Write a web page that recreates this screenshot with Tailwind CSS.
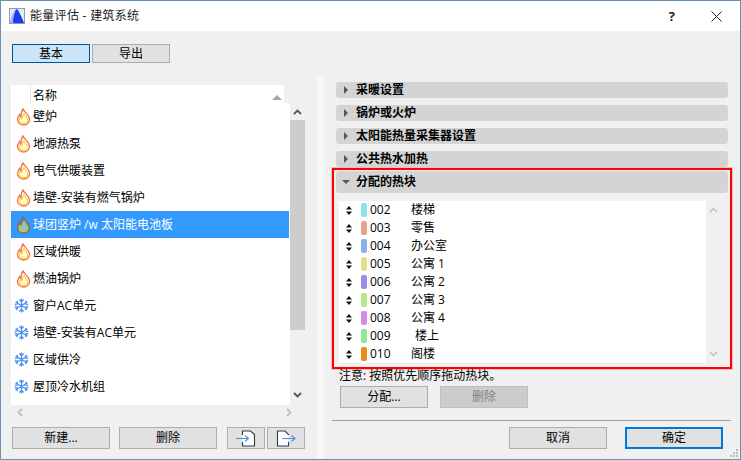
<!DOCTYPE html>
<html lang="zh">
<head>
  <meta charset="UTF-8" />
  <title>能量评估 - 建筑系统</title>
  <script src="https://cdn.jsdelivr.net/npm/@tailwindcss/browser@4"></script>
</head>
<body class="bg-[#f0f0f0]">
  <div class="relative w-[741px] h-[460px] overflow-hidden bg-[#f0f0f0] border border-[#6d8fb0] text-[12px] leading-[16px] text-black font-['Open_Sans','Noto_Sans_CJK_SC',sans-serif]">

    <!-- Title bar -->
    <div class="flex items-center h-[30px] bg-white">
      <svg class="ml-[8px] w-[16px] h-[16px]" viewBox="0 0 16 16">
        <rect x="0.5" y="0.5" width="15" height="15" fill="#e8edf5" stroke="#8a9bb5" />
        <path d="M1 15 C3 8 5 2 8 1 C10 3 13 10 15 15 Z" fill="#1a3cf0" />
        <path d="M1 15 C2 9 4 4 7 1.5 C5 6 4 11 4 15 Z" fill="#a9b8f5" />
      </svg>
      <span class="ml-[5px] text-[#222] tracking-[0.3px]">能量评估 - 建筑系统</span>
      <span class="ml-auto mr-[36px] text-[13px] font-bold text-[#222]">?</span>
      <svg class="mr-[18px] w-[11px] h-[11px]" viewBox="0 0 11 11"><path d="M0.5 0.5 L10.5 10.5 M10.5 0.5 L0.5 10.5" stroke="#222" stroke-width="1" fill="none" /></svg>
    </div>

    <!-- Tabs -->
    <div class="flex gap-[2px] pl-[11px] pt-[13px] h-[40px]">
      <div class="flex items-center justify-center w-[78px] h-[19px] bg-[#cce4f7] border border-[#005499]">基本</div>
      <div class="flex items-center justify-center w-[78px] h-[19px] bg-[#e1e1e1] border border-[#adadad]">导出</div>
    </div>

    <div class="flex">
      <!-- Left: system list -->
      <div class="w-[305px] pl-[10px] pt-[14px] shrink-0">
        <div class="flex items-center w-[273px] h-[18px] bg-white">
          <div class="w-[20px] h-full border-r border-[#e5e5e5]"></div>
          <span class="ml-[2px] pt-[3px]">名称</span>
          <span class="ml-auto mr-[2px] mt-[6px] w-0 h-0 border-x-[5px] border-x-transparent border-b-[5px] border-b-[#a6a6a6]"></span>
        </div>
        <div class="flex w-[294px] h-[302px]">
          <div id="systems" class="w-[279px] h-full bg-white">
            <div class="flex items-center h-[27px]"><svg class="ml-[5px] w-[15px] h-[18px]" viewBox="0 0 15 18"><path d="M7 1 C8 4 13 6 13.500 11 C13.500 15 10.500 17 7.500 17 C4 17 1.500 14.500 1.500 11.500 C1.500 9.500 2.500 8 3.500 6.500 C4 8 4.500 8.500 5 9 C5 6 5.500 3 7 1 Z" fill="#fff" stroke="#f0704a" stroke-width="1.300" /><path d="M8 5.500 C9 8 11.800 9.500 11.800 12 C11.800 14.500 9.800 15.600 7.500 15.600 C5 15.600 3.200 14 3.200 12 C3.200 11 3.600 10.300 4 9.700 C5 11 6.500 10.500 6.500 9 C6.500 8 7.300 6.500 8 5.500 Z" fill="#fffbd0" stroke="#ffd23f" stroke-width="1.200" /></svg><span class="ml-[2px]">壁炉</span></div>
            <div class="flex items-center h-[27px]"><svg class="ml-[5px] w-[15px] h-[18px]" viewBox="0 0 15 18"><path d="M7 1 C8 4 13 6 13.500 11 C13.500 15 10.500 17 7.500 17 C4 17 1.500 14.500 1.500 11.500 C1.500 9.500 2.500 8 3.500 6.500 C4 8 4.500 8.500 5 9 C5 6 5.500 3 7 1 Z" fill="#fff" stroke="#f0704a" stroke-width="1.300" /><path d="M8 5.500 C9 8 11.800 9.500 11.800 12 C11.800 14.500 9.800 15.600 7.500 15.600 C5 15.600 3.200 14 3.200 12 C3.200 11 3.600 10.300 4 9.700 C5 11 6.500 10.500 6.500 9 C6.500 8 7.300 6.500 8 5.500 Z" fill="#fffbd0" stroke="#ffd23f" stroke-width="1.200" /></svg><span class="ml-[2px]">地源热泵</span></div>
            <div class="flex items-center h-[27px]"><svg class="ml-[5px] w-[15px] h-[18px]" viewBox="0 0 15 18"><path d="M7 1 C8 4 13 6 13.500 11 C13.500 15 10.500 17 7.500 17 C4 17 1.500 14.500 1.500 11.500 C1.500 9.500 2.500 8 3.500 6.500 C4 8 4.500 8.500 5 9 C5 6 5.500 3 7 1 Z" fill="#fff" stroke="#f0704a" stroke-width="1.300" /><path d="M8 5.500 C9 8 11.800 9.500 11.800 12 C11.800 14.500 9.800 15.600 7.500 15.600 C5 15.600 3.200 14 3.200 12 C3.200 11 3.600 10.300 4 9.700 C5 11 6.500 10.500 6.500 9 C6.500 8 7.300 6.500 8 5.500 Z" fill="#fffbd0" stroke="#ffd23f" stroke-width="1.200" /></svg><span class="ml-[2px]">电气供暖装置</span></div>
            <div class="flex items-center h-[27px]"><svg class="ml-[5px] w-[15px] h-[18px]" viewBox="0 0 15 18"><path d="M7 1 C8 4 13 6 13.500 11 C13.500 15 10.500 17 7.500 17 C4 17 1.500 14.500 1.500 11.500 C1.500 9.500 2.500 8 3.500 6.500 C4 8 4.500 8.500 5 9 C5 6 5.500 3 7 1 Z" fill="#fff" stroke="#f0704a" stroke-width="1.300" /><path d="M8 5.500 C9 8 11.800 9.500 11.800 12 C11.800 14.500 9.800 15.600 7.500 15.600 C5 15.600 3.200 14 3.200 12 C3.200 11 3.600 10.300 4 9.700 C5 11 6.500 10.500 6.500 9 C6.500 8 7.300 6.500 8 5.500 Z" fill="#fffbd0" stroke="#ffd23f" stroke-width="1.200" /></svg><span class="ml-[2px]">墙壁-安装有燃气锅炉</span></div>
            <div class="flex items-center h-[27px] w-[278px] bg-[#3399ff] text-white"><svg class="ml-[5px] w-[15px] h-[18px]" viewBox="0 0 15 18"><path d="M7 1 C8 4 13 6 13.500 11 C13.500 15 10.500 17 7.500 17 C4 17 1.500 14.500 1.500 11.500 C1.500 9.500 2.500 8 3.500 6.500 C4 8 4.500 8.500 5 9 C5 6 5.500 3 7 1 Z" fill="#3399ff" stroke="#a8603f" stroke-width="1.300" /><path d="M8 5.500 C9 8 11.800 9.500 11.800 12 C11.800 14.500 9.800 15.600 7.500 15.600 C5 15.600 3.200 14 3.200 12 C3.200 11 3.600 10.300 4 9.700 C5 11 6.500 10.500 6.500 9 C6.500 8 7.300 6.500 8 5.500 Z" fill="#8fc4c8" stroke="#c8c838" stroke-width="1.200" /></svg><span class="ml-[2px]">球团竖炉 /w 太阳能电池板</span></div>
            <div class="flex items-center h-[27px]"><svg class="ml-[5px] w-[15px] h-[18px]" viewBox="0 0 15 18"><path d="M7 1 C8 4 13 6 13.500 11 C13.500 15 10.500 17 7.500 17 C4 17 1.500 14.500 1.500 11.500 C1.500 9.500 2.500 8 3.500 6.500 C4 8 4.500 8.500 5 9 C5 6 5.500 3 7 1 Z" fill="#fff" stroke="#f0704a" stroke-width="1.300" /><path d="M8 5.500 C9 8 11.800 9.500 11.800 12 C11.800 14.500 9.800 15.600 7.500 15.600 C5 15.600 3.200 14 3.200 12 C3.200 11 3.600 10.300 4 9.700 C5 11 6.500 10.500 6.500 9 C6.500 8 7.300 6.500 8 5.500 Z" fill="#fffbd0" stroke="#ffd23f" stroke-width="1.200" /></svg><span class="ml-[2px]">区域供暖</span></div>
            <div class="flex items-center h-[27px]"><svg class="ml-[5px] w-[15px] h-[18px]" viewBox="0 0 15 18"><path d="M7 1 C8 4 13 6 13.500 11 C13.500 15 10.500 17 7.500 17 C4 17 1.500 14.500 1.500 11.500 C1.500 9.500 2.500 8 3.500 6.500 C4 8 4.500 8.500 5 9 C5 6 5.500 3 7 1 Z" fill="#fff" stroke="#f0704a" stroke-width="1.300" /><path d="M8 5.500 C9 8 11.800 9.500 11.800 12 C11.800 14.500 9.800 15.600 7.500 15.600 C5 15.600 3.200 14 3.200 12 C3.200 11 3.600 10.300 4 9.700 C5 11 6.500 10.500 6.500 9 C6.500 8 7.300 6.500 8 5.500 Z" fill="#fffbd0" stroke="#ffd23f" stroke-width="1.200" /></svg><span class="ml-[2px]">燃油锅炉</span></div>
            <div class="flex items-center h-[27px]"><svg class="ml-[3px] w-[15px] h-[15px]" viewBox="0 0 15 15"><path d="M7.500 0.500 V14.500 M1.500 4 L13.500 11 M13.500 4 L1.500 11 M5.300 1.500 L7.500 3.700 L9.700 1.500 M5.300 13.500 L7.500 11.300 L9.700 13.500 M0.800 6.500 L3.700 5.700 L3 2.800 M14.200 6.500 L11.300 5.700 L12 2.800 M0.800 8.500 L3.700 9.300 L3 12.200 M14.200 8.500 L11.300 9.300 L12 12.200" stroke="#4a90f0" stroke-width="1.300" fill="none" /></svg><span class="ml-[4px]">窗户AC单元</span></div>
            <div class="flex items-center h-[27px]"><svg class="ml-[3px] w-[15px] h-[15px]" viewBox="0 0 15 15"><path d="M7.500 0.500 V14.500 M1.500 4 L13.500 11 M13.500 4 L1.500 11 M5.300 1.500 L7.500 3.700 L9.700 1.500 M5.300 13.500 L7.500 11.300 L9.700 13.500 M0.800 6.500 L3.700 5.700 L3 2.800 M14.200 6.500 L11.300 5.700 L12 2.800 M0.800 8.500 L3.700 9.300 L3 12.200 M14.200 8.500 L11.300 9.300 L12 12.200" stroke="#4a90f0" stroke-width="1.300" fill="none" /></svg><span class="ml-[4px]">墙壁-安装有AC单元</span></div>
            <div class="flex items-center h-[27px]"><svg class="ml-[3px] w-[15px] h-[15px]" viewBox="0 0 15 15"><path d="M7.500 0.500 V14.500 M1.500 4 L13.500 11 M13.500 4 L1.500 11 M5.300 1.500 L7.500 3.700 L9.700 1.500 M5.300 13.500 L7.500 11.300 L9.700 13.500 M0.800 6.500 L3.700 5.700 L3 2.800 M14.200 6.500 L11.300 5.700 L12 2.800 M0.800 8.500 L3.700 9.300 L3 12.200 M14.200 8.500 L11.300 9.300 L12 12.200" stroke="#4a90f0" stroke-width="1.300" fill="none" /></svg><span class="ml-[4px]">区域供冷</span></div>
            <div class="flex items-center h-[27px]"><svg class="ml-[3px] w-[15px] h-[15px]" viewBox="0 0 15 15"><path d="M7.500 0.500 V14.500 M1.500 4 L13.500 11 M13.500 4 L1.500 11 M5.300 1.500 L7.500 3.700 L9.700 1.500 M5.300 13.500 L7.500 11.300 L9.700 13.500 M0.800 6.500 L3.700 5.700 L3 2.800 M14.200 6.500 L11.300 5.700 L12 2.800 M0.800 8.500 L3.700 9.300 L3 12.200 M14.200 8.500 L11.300 9.300 L12 12.200" stroke="#4a90f0" stroke-width="1.300" fill="none" /></svg><span class="ml-[4px]">屋顶冷水机组</span></div>
          </div>
          <!-- Vertical scrollbar -->
          <div class="flex flex-col items-center w-[15px] h-full">
            <svg class="mt-[6px] w-[9px] h-[6px]" viewBox="0 0 9 6"><path d="M1 5 L4.500 1.500 L8 5" stroke="#555" stroke-width="1.800" fill="none" /></svg>
            <div class="mt-[5px] w-full h-[210px] bg-[#cdcdcd]"></div>
            <svg class="mt-[62px] w-[9px] h-[6px]" viewBox="0 0 9 6"><path d="M1 1 L4.500 4.500 L8 1" stroke="#555" stroke-width="1.800" fill="none" /></svg>
          </div>
        </div>
        <!-- Horizontal scrollbar -->
        <div class="flex items-center justify-between w-[284px] h-[15px] pl-[6px] pr-[3px]">
          <svg class="w-[6px] h-[9px]" viewBox="0 0 6 9"><path d="M5 1 L1.500 4.500 L5 8" stroke="#c0c0c0" stroke-width="1.800" fill="none" /></svg>
          <svg class="w-[6px] h-[9px]" viewBox="0 0 6 9"><path d="M1 1 L4.500 4.500 L1 8" stroke="#c0c0c0" stroke-width="1.800" fill="none" /></svg>
        </div>
        <!-- List buttons -->
        <div class="flex mt-[7px] pl-[1px]">
          <div class="flex items-center justify-center w-[98px] h-[22px] bg-[#e1e1e1] border border-[#adadad]">新建...</div>
          <div class="flex items-center justify-center ml-[9px] w-[98px] h-[22px] bg-[#e1e1e1] border border-[#adadad]">删除</div>
          <div class="flex items-center justify-center ml-[10px] w-[38px] h-[22px] bg-[#e1e1e1] border border-[#adadad]">
            <svg class="w-[20px] h-[17px]" viewBox="0 0 20 17"><path d="M6.500 5 V1 H14.500 L18.500 4.500 V16 H6.500 V12" fill="#fff" stroke="#2f3a48" stroke-width="1.100" /><path d="M0 8.500 H12 M9 5.500 L12.500 8.500 L9 11.500" stroke="#3f92f2" stroke-width="1.100" fill="none" /></svg>
          </div>
          <div class="flex items-center justify-center ml-[2px] w-[38px] h-[22px] bg-[#e1e1e1] border border-[#adadad]">
            <svg class="w-[20px] h-[17px]" viewBox="0 0 20 17"><path d="M12.500 5 V4.500 L9 1 H1.500 V16 H12.500 V12" fill="#fff" stroke="#2f3a48" stroke-width="1.100" /><path d="M6 8.500 H18.500 M15.500 5.500 L19 8.500 L15.500 11.500" stroke="#3f92f2" stroke-width="1.100" fill="none" /></svg>
          </div>
        </div>
      </div>

      <!-- Splitter stripe -->
      <div class="w-[7px] h-[384px] mt-[4px] ml-[11px] bg-[#f6f6f6] shrink-0"></div>

      <!-- Right: settings -->
      <div class="flex-1 pl-[13px] pt-[11px]">
        <div class="flex flex-col gap-[7px] ml-[-1px]">
          <div class="flex items-center w-[392px] h-[16px] rounded-[3px] bg-[#d4d4d4] font-bold"><span class="ml-[8px] w-0 h-0 border-y-[4px] border-y-transparent border-l-[4px] border-l-[#555]"></span><span class="ml-[8px]">采暖设置</span></div>
          <div class="flex items-center w-[392px] h-[16px] rounded-[3px] bg-[#d4d4d4] font-bold"><span class="ml-[8px] w-0 h-0 border-y-[4px] border-y-transparent border-l-[4px] border-l-[#555]"></span><span class="ml-[8px]">锅炉或火炉</span></div>
          <div class="flex items-center w-[392px] h-[16px] rounded-[3px] bg-[#d4d4d4] font-bold"><span class="ml-[8px] w-0 h-0 border-y-[4px] border-y-transparent border-l-[4px] border-l-[#555]"></span><span class="ml-[8px]">太阳能热量采集器设置</span></div>
          <div class="flex items-center w-[392px] h-[16px] rounded-[3px] bg-[#d4d4d4] font-bold"><span class="ml-[8px] w-0 h-0 border-y-[4px] border-y-transparent border-l-[4px] border-l-[#555]"></span><span class="ml-[8px]">公共热水加热</span></div>
        </div>
        <!-- Highlighted block -->
        <div class="w-[400px] h-[201px] ml-[-5px] mt-[1px] border-[2px] border-[#ff0000] shadow-[0_0_0_1px_rgba(255,0,0,0.2)] px-[2px] pt-[1px]">
          <div class="flex items-center w-[392px] h-[22px] rounded-[3px] bg-[#d4d4d4] font-bold"><span class="ml-[6px] w-0 h-0 border-x-[4px] border-x-transparent border-t-[4px] border-t-[#555]"></span><span class="ml-[6px]">分配的热块</span></div>
          <div class="flex mt-[8px] ml-[3px]">
            <div class="w-[367px] h-[162px] bg-white">
              <div class="flex items-center h-[18px]"><svg class="ml-[7px] w-[6px] h-[9px]" viewBox="0 0 6 9"><path d="M3 0 L6 3.500 H0 Z M0 5.500 H6 L3 9 Z" fill="#111" /></svg><span class="ml-[9px] w-[6px] h-[14px] rounded-[2px] bg-[#8de3e6]"></span><span class="ml-[3px] w-[41px]">002</span><span>楼梯</span></div>
              <div class="flex items-center h-[18px]"><svg class="ml-[7px] w-[6px] h-[9px]" viewBox="0 0 6 9"><path d="M3 0 L6 3.500 H0 Z M0 5.500 H6 L3 9 Z" fill="#111" /></svg><span class="ml-[9px] w-[6px] h-[14px] rounded-[2px] bg-[#e7a48c]"></span><span class="ml-[3px] w-[41px]">003</span><span>零售</span></div>
              <div class="flex items-center h-[18px]"><svg class="ml-[7px] w-[6px] h-[9px]" viewBox="0 0 6 9"><path d="M3 0 L6 3.500 H0 Z M0 5.500 H6 L3 9 Z" fill="#111" /></svg><span class="ml-[9px] w-[6px] h-[14px] rounded-[2px] bg-[#8cb1e8]"></span><span class="ml-[3px] w-[41px]">004</span><span>办公室</span></div>
              <div class="flex items-center h-[18px]"><svg class="ml-[7px] w-[6px] h-[9px]" viewBox="0 0 6 9"><path d="M3 0 L6 3.500 H0 Z M0 5.500 H6 L3 9 Z" fill="#111" /></svg><span class="ml-[9px] w-[6px] h-[14px] rounded-[2px] bg-[#e8df8c]"></span><span class="ml-[3px] w-[41px]">005</span><span>公寓 1</span></div>
              <div class="flex items-center h-[18px]"><svg class="ml-[7px] w-[6px] h-[9px]" viewBox="0 0 6 9"><path d="M3 0 L6 3.500 H0 Z M0 5.500 H6 L3 9 Z" fill="#111" /></svg><span class="ml-[9px] w-[6px] h-[14px] rounded-[2px] bg-[#9f8ce8]"></span><span class="ml-[3px] w-[41px]">006</span><span>公寓 2</span></div>
              <div class="flex items-center h-[18px]"><svg class="ml-[7px] w-[6px] h-[9px]" viewBox="0 0 6 9"><path d="M3 0 L6 3.500 H0 Z M0 5.500 H6 L3 9 Z" fill="#111" /></svg><span class="ml-[9px] w-[6px] h-[14px] rounded-[2px] bg-[#b8e88c]"></span><span class="ml-[3px] w-[41px]">007</span><span>公寓 3</span></div>
              <div class="flex items-center h-[18px]"><svg class="ml-[7px] w-[6px] h-[9px]" viewBox="0 0 6 9"><path d="M3 0 L6 3.500 H0 Z M0 5.500 H6 L3 9 Z" fill="#111" /></svg><span class="ml-[9px] w-[6px] h-[14px] rounded-[2px] bg-[#d58ce8]"></span><span class="ml-[3px] w-[41px]">008</span><span>公寓 4</span></div>
              <div class="flex items-center h-[18px]"><svg class="ml-[7px] w-[6px] h-[9px]" viewBox="0 0 6 9"><path d="M3 0 L6 3.500 H0 Z M0 5.500 H6 L3 9 Z" fill="#111" /></svg><span class="ml-[9px] w-[6px] h-[14px] rounded-[2px] bg-[#8ce89a]"></span><span class="ml-[3px] w-[41px]">009</span><span class="ml-[4px]">楼上</span></div>
              <div class="flex items-center h-[18px]"><svg class="ml-[7px] w-[6px] h-[9px]" viewBox="0 0 6 9"><path d="M3 0 L6 3.500 H0 Z M0 5.500 H6 L3 9 Z" fill="#111" /></svg><span class="ml-[9px] w-[6px] h-[14px] rounded-[2px] bg-[#e88c1e]"></span><span class="ml-[3px] w-[41px]">010</span><span>阁楼</span></div>
            </div>
            <div class="flex flex-col items-center justify-between w-[15px] h-[162px] py-[6px]">
              <svg class="w-[9px] h-[6px]" viewBox="0 0 9 6"><path d="M1 5 L4.500 1.500 L8 5" stroke="#c8c8c8" stroke-width="1.800" fill="none" /></svg>
              <svg class="w-[9px] h-[6px]" viewBox="0 0 9 6"><path d="M1 1 L4.500 4.500 L8 1" stroke="#c8c8c8" stroke-width="1.800" fill="none" /></svg>
            </div>
          </div>
        </div>
        <div class="ml-[2px] mt-[-1px] h-[16px] leading-[16px]">注意: 按照优先顺序拖动热块。</div>
        <div class="flex gap-[12px] ml-[3px] mt-[2px]">
          <div class="flex items-center justify-center w-[88px] h-[22px] bg-[#e1e1e1] border border-[#adadad]">分配...</div>
          <div class="flex items-center justify-center w-[88px] h-[22px] bg-[#cccccc] border border-[#bfbfbf] text-[#838383]">删除</div>
        </div>
        <div class="w-[399px] ml-[-5px] mt-[12px] border-t border-[#a0a0a0]"></div>
        <div class="flex mt-[6px] ml-[172px]">
          <div class="flex items-center justify-center w-[98px] h-[22px] bg-[#e1e1e1] border border-[#adadad]">取消</div>
          <div class="flex items-center justify-center ml-[18px] w-[98px] h-[22px] bg-[#e1e1e1] border-[2px] border-[#0078d7]">确定</div>
        </div>
      </div>
    </div>

    <!-- Resize grip -->
    <svg class="absolute right-[1px] bottom-[1px] w-[9px] h-[9px]" viewBox="0 0 9 9"><path d="M6 0h2v2h-2z M3 3h2v2h-2z M6 3h2v2h-2z M0 6h2v2h-2z M3 6h2v2h-2z M6 6h2v2h-2z" fill="#bcbcbc" /></svg>
  </div>
</body>
</html>
